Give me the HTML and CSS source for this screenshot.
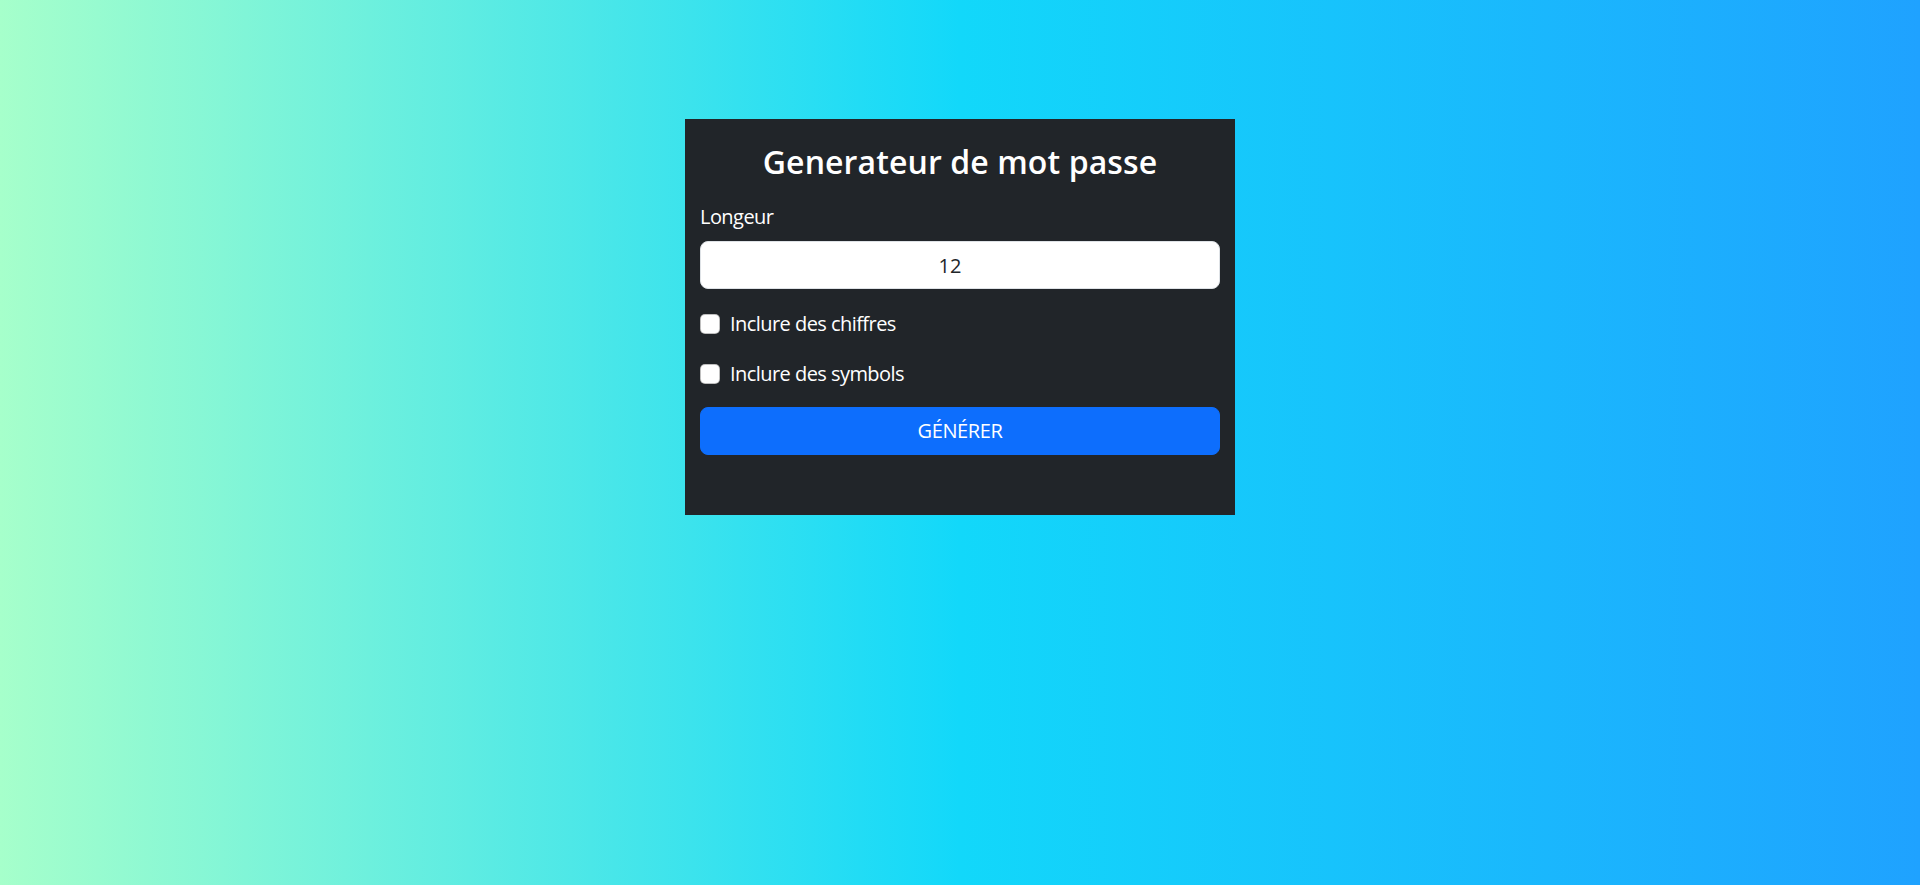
FILE: index.html
```html
<!DOCTYPE html>
<html lang="fr">
<head>
<meta charset="utf-8">
<title>Generateur de mot passe</title>
<link rel="stylesheet" href="styles.css">
</head>
<body>
<main class="page">
  <section class="card">
    <h2 class="title">Generateur de mot passe</h2>
    <label class="label" for="len">Longeur</label>
    <input class="field" id="len" type="number" value="12">
    <label class="check"><input class="box" type="checkbox"><span>Inclure des chiffres</span></label>
    <label class="check"><input class="box" type="checkbox"><span>Inclure des symbols</span></label>
    <button class="btn" type="button">Générer</button>
  </section>
</main>
</body>
</html>
```
FILE: styles.css
```css
* { box-sizing: border-box; }
html, body { margin: 0; height: 100%; }
body {
  font-family: "Open Sans", "Noto Sans", sans-serif;
  font-size: 20px;
  line-height: 1.5;
  color: #fff;
  background: linear-gradient(to right, #a6ffcb 0%, #12d8fa 50%, #1fa2ff 100%);
}
.page {
  height: 100%;
  display: flex;
  justify-content: center;
  align-items: flex-start;
  padding-top: 119px;
}
.card {
  width: 550px;
  background: #212529;
  padding: 24px 15px 60px;
  display: flex;
  flex-direction: column;
}
.title {
  margin: 0 0 21px;
  font-size: 32px;
  line-height: 1.2;
  font-weight: 600;
  text-align: center;
  letter-spacing: 0.1px;
}
.label {
  display: block;
  height: 30px;
  margin-bottom: 9px;
  letter-spacing: -0.55px;
}
.field {
  display: block;
  width: 100%;
  height: 48px;
  padding: 8px 36px 8px 16px;
  font: inherit;
  color: #212529;
  background: #fff;
  border: 1px solid #dee2e6;
  border-radius: 8px;
  text-align: center;
  margin-bottom: 20px;
  -moz-appearance: textfield;
}
.field::-webkit-inner-spin-button,
.field::-webkit-outer-spin-button { -webkit-appearance: none; margin: 0; }
.check {
  display: flex;
  align-items: center;
  height: 30px;
  margin-bottom: 20px;
  letter-spacing: -0.55px;
}
.check:last-of-type { margin-bottom: 18px; }
.box {
  appearance: none;
  -webkit-appearance: none;
  width: 20px;
  height: 20px;
  margin: 0 10px 0 0;
  background: #fff;
  border: 1px solid rgba(0,0,0,.25);
  border-radius: 5px;
  flex: none;
}
.btn {
  display: block;
  width: 100%;
  height: 48px;
  font: inherit;
  color: #fff;
  background: #0d6efd;
  border: 1px solid #0d6efd;
  border-radius: 8px;
  text-transform: uppercase;
  letter-spacing: -0.4px;
  cursor: pointer;
}
```
